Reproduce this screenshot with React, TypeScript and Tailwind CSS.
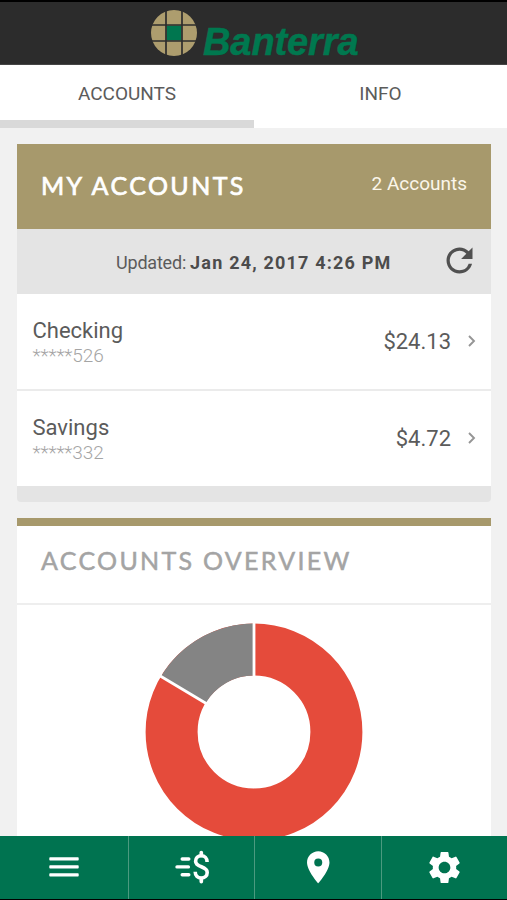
import type { ReactNode } from "react";
import { MdPlace, MdRefresh, MdSettings } from "react-icons/md";

const accounts = [
  { name: "Checking", mask: "*****", digits: "526", balance: "$24.13" },
  { name: "Savings", mask: "*****", digits: "332", balance: "$4.72" },
];

function Logo() {
  return (
    <svg width="48" height="48" viewBox="0 0 48 48">
      <circle cx="24" cy="24" r="23" fill="#ad9d6e" />
      <rect x="16.5" y="16.5" width="15" height="15" fill="#00764f" />
      <path d="M16 1v46M32 1v46M1 16h46M1 32h46" stroke="#2c2c2c" strokeWidth="1.7" />
    </svg>
  );
}

function Chevron() {
  return (
    <svg width="8" height="12" viewBox="0 0 8 12" fill="none">
      <path d="M1 1l5 5-5 5" stroke="#959595" strokeWidth="1.9" />
    </svg>
  );
}

function Donut() {
  return (
    <svg className="block" width="220" height="220" viewBox="0 0 220 220">
      <circle cx="110" cy="110" r="82.4" fill="none" stroke="#e54b3b" strokeWidth="52" />
      <path d="M110 1.6A108.4 108.4 0 0 0 17 54.4L61.6 81.2A56.4 56.4 0 0 1 110 53.6Z" fill="#848484" />
      <path d="M110 0V56M15 53.2L63.5 82.3" stroke="#fff" strokeWidth="2.8" />
    </svg>
  );
}

function MenuIcon() {
  return (
    <svg width="30" height="20" viewBox="0 0 30 20" fill="white">
      <rect x="0.3" y="0.2" width="29.4" height="3.3" rx="0.8" />
      <rect x="0.3" y="8.2" width="29.4" height="3.3" rx="0.8" />
      <rect x="0.3" y="16.2" width="29.4" height="3.3" rx="0.8" />
    </svg>
  );
}

function TransferIcon() {
  return (
    <svg width="34" height="34" viewBox="0 0 34 34" fill="none" stroke="white">
      <path d="M7.2 9h6.6M2 16.9h11.4M7.2 24.7h6.6" strokeWidth="3.4" strokeLinecap="round" />
      <path
        d="M32.1 12C32.1 8 29.7 5.8 26.3 5.8S20.6 8 20.6 11.2C20.6 18 32.2 15.6 32.2 22.4C32.2 25.8 29.7 28 26.3 28S20.2 25.8 20.2 21.8"
        strokeWidth="3.6"
      />
      <path d="M26.3 2.6V5.5M26.3 28.5V31.6" strokeWidth="3.7" strokeLinecap="round" />
    </svg>
  );
}

function NavItem({ children }: { children: ReactNode }) {
  return (
    <button className="flex items-center justify-center border-r border-[#4b9a7f] pb-px text-white last:border-r-0">
      {children}
    </button>
  );
}

export default function App() {
  return (
    <div className="flex h-[900px] w-[507px] flex-col overflow-hidden bg-[#f1f1f1] font-['Roboto',sans-serif] text-[#5b5b5b]">
      <header className="flex h-[65px] shrink-0 items-center border-b border-t-2 border-b-[#454545] border-t-black bg-[#2c2c2c] pl-[150px]">
        <Logo />
        <span className="ml-[5px] mt-[17px] font-['Liberation_Sans',sans-serif] text-[38px] font-bold italic leading-none tracking-[-0.1px] text-[#00784f] [-webkit-text-stroke:0.5px]">
          Banterra
        </span>
      </header>

      <nav className="flex h-[63px] shrink-0 bg-white text-[19px] leading-[57px]">
        <div className="h-full w-[254px] border-b-8 border-[#d9d9d9] text-center">ACCOUNTS</div>
        <div className="flex-1 text-center">INFO</div>
      </nav>

      <main className="min-h-0 flex-1 overflow-hidden px-[17px] pt-4 pr-4">
        <section className="overflow-hidden rounded-b">
          <div className="flex h-[85px] justify-between bg-[#a7996c] px-6 text-white">
            <h1 className="mt-[25px] font-['Lato',sans-serif] text-[25px] font-normal leading-8 tracking-[2.4px] [-webkit-text-stroke:0.7px]">MY ACCOUNTS</h1>
            <span className="mt-6 text-[19px] leading-8 text-[#fbf6ea]">2 Accounts</span>
          </div>
          <div className="flex h-[65px] items-center bg-[#e4e4e4] pl-[99px] pr-3 text-[18px]">
            <span className="mt-0.5 tracking-[-0.2px]">Updated:</span>
            <b className="ml-1 mt-0.5 tracking-[1.2px] text-[#4c4c4c]">Jan 24, 2017 4:26 PM</b>
            <MdRefresh className="mb-0.5 ml-auto text-[#505050]" size={39} />
          </div>
          <div className="divide-y-2 divide-[#ebebeb] bg-white">
            {accounts.map((a) => (
              <div key={a.name} className="pl-[15.5px] pr-[15px]">
                <div className="flex h-[95px] items-center justify-between">
                  <div className="pt-0.5">
                    <div className="text-[22px] leading-[26px]">{a.name}</div>
                    <div className="text-[19px] font-light leading-6 tracking-[-0.1px] text-[#a5a5a5]">
                      {a.mask}{a.digits}
                    </div>
                  </div>
                  <div className="flex items-center gap-[17px] pb-px text-[22px]">
                    {a.balance}
                    <Chevron />
                  </div>
                </div>
              </div>
            ))}
          </div>
          <div className="h-4 bg-[#e4e4e4]" />
        </section>

        <section className="mt-4 border-t-8 border-[#a7996c] bg-white">
          <h2 className="h-[79px] border-b-2 border-[#eeeeee] pl-6 pt-[18px] font-['Lato',sans-serif] text-[25px] font-normal leading-8 tracking-[2.3px] text-[#a4a4a4] [-webkit-text-stroke:0.5px]">
            ACCOUNTS OVERVIEW
          </h2>
          <div className="flex justify-center pt-[17px]">
            <Donut />
          </div>
        </section>
      </main>

      <footer className="grid h-16 shrink-0 grid-cols-[129px_126px_127px_125px] border-b border-black bg-[#007350]">
        <NavItem><MenuIcon /></NavItem>
        <NavItem><TransferIcon /></NavItem>
        <NavItem><MdPlace size={38.5} /></NavItem>
        <NavItem><MdSettings size={39} /></NavItem>
      </footer>
    </div>
  );
}
